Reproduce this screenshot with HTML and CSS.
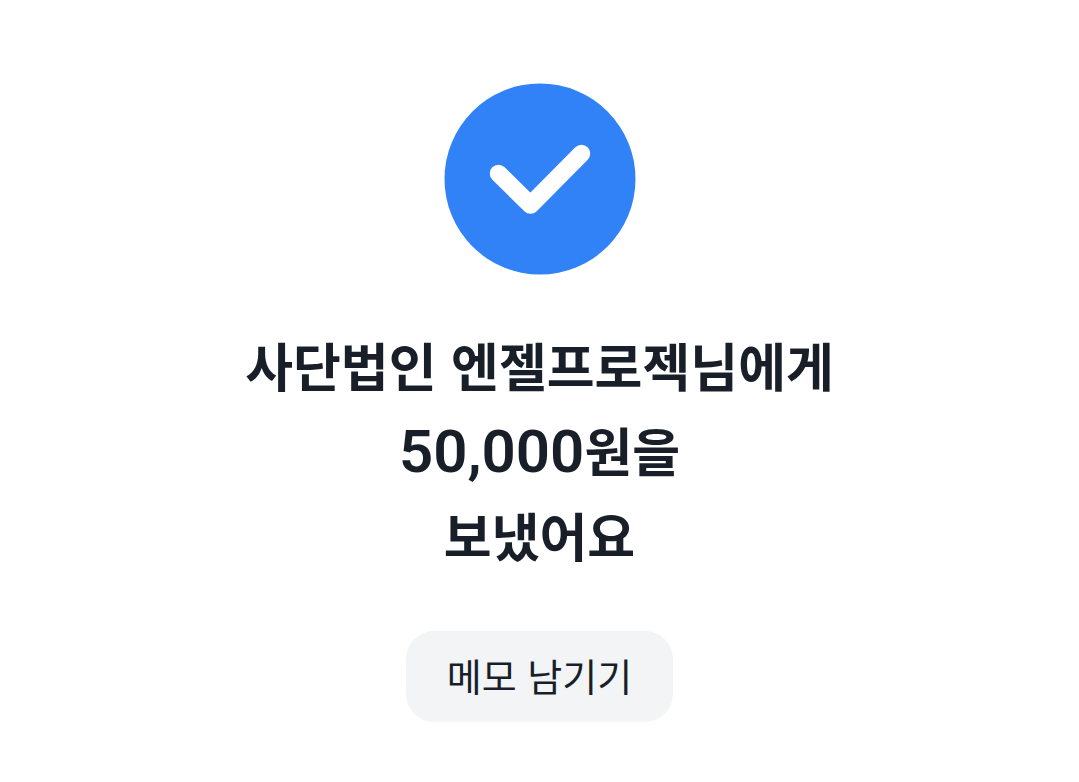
FILE: index.html
```html
<!DOCTYPE html>
<html lang="ko">
<head>
    <meta charset="UTF-8">
    <meta name="viewport" content="width=device-width, initial-scale=1.0">
    <title>송금 완료</title>
    <link rel="stylesheet" href="styles.css">
</head>
<body>
    <main class="complete">
        <svg class="check-icon" viewBox="0 0 192 192" aria-hidden="true">
            <circle cx="96" cy="96" r="95.5" fill="#3182f6"/>
            <path d="M54.5 90.5 L86.5 122 L137.5 70.5" fill="none" stroke="#fff" stroke-width="17.5" stroke-linecap="round" stroke-linejoin="round"/>
        </svg>

        <h1 class="message">
            사단법인 엔젤프로젝님에게<br>
            <span class="amount">50,000</span>원을<br>
            보냈어요
        </h1>

        <button type="button" class="memo-button">메모 남기기</button>
    </main>
</body>
</html>
```

FILE: styles.css
```css
body {
    margin: 0;
    background-color: #fff;
    color: #191f28;
    font-family: 'Noto Sans CJK KR', sans-serif;
}

.complete {
    display: flex;
    flex-direction: column;
    align-items: center;
    padding: 83px 24px 60px;
}

.check-icon {
    width: 192px;
    height: 192px;
}

.message {
    margin: 47px 0 0;
    font-size: 52px;
    font-weight: 700;
    line-height: 85px;
    text-align: center;
}

.amount {
    font-family: Roboto, sans-serif;
    font-size: 60px;
    font-weight: 600;
    line-height: 1;
}

.memo-button {
    box-sizing: border-box;
    height: 91px;
    margin-top: 54px;
    padding: 0 41px 4px;
    border: none;
    border-radius: 28px;
    background-color: #f2f4f6;
    color: #191f28;
    font-family: inherit;
    font-size: 38px;
    font-weight: 400;
    cursor: pointer;
}

.memo-button:hover {
    background-color: #e5e8eb;
}
```
